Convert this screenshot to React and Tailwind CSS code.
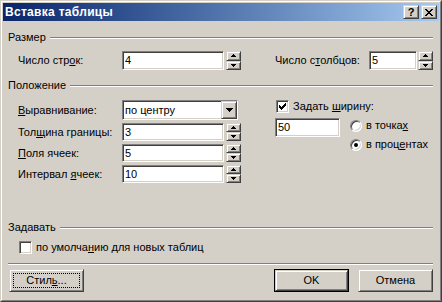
const raised =
  'border border-t-[#d4d0c8] border-l-[#d4d0c8] border-r-[#404040] border-b-[#404040] shadow-[inset_1px_1px_0_#fff,inset_-1px_-1px_0_#808080] bg-[#d4d0c8]';
const sunken =
  'border border-t-[#808080] border-l-[#808080] border-r-white border-b-white shadow-[inset_1px_1px_0_#404040,inset_-1px_-1px_0_#d4d0c8]';

function U({ children }) {
  return <span className="underline decoration-1 underline-offset-[1px]">{children}</span>;
}

function Pixels({ w, h, rows }) {
  return (
    <svg width={w} height={h} shapeRendering="crispEdges">
      {rows.map((r, y) =>
        r.split('').map((c, x) => (c === '#' ? <rect key={`${x}-${y}`} x={x} y={y} width="1" height="1" fill="#000" /> : null))
      )}
    </svg>
  );
}

function Spin() {
  return (
    <div className="flex h-full w-[15px] flex-col">
      <div className={`${raised} flex h-1/2 items-center justify-center`}>
        <Pixels w={5} h={3} rows={['..#..', '.###.', '#####']} />
      </div>
      <div className={`${raised} flex h-1/2 items-center justify-center`}>
        <Pixels w={5} h={3} rows={['#####', '.###.', '..#..']} />
      </div>
    </div>
  );
}

function Field({ w, value }) {
  return <div className={`${sunken} ${w} flex h-full items-center bg-white pl-[2px]`}>{value}</div>;
}

function Group({ title, className = '' }) {
  return (
    <div className={`flex h-[13px] items-center pl-[5px] pr-[6px] ${className}`}>
      <span>{title}</span>
      <div className="ml-[4px] h-[2px] flex-1 border-t border-b border-t-[#808080] border-b-white" />
    </div>
  );
}

function CheckBox({ checked }) {
  return (
    <div className={`${sunken} flex h-[13px] w-[13px] items-center justify-center bg-white`}>
      {checked && (
        <Pixels w={7} h={7} rows={['......#', '.....##', '#...###', '##.###.', '#####..', '.###...', '..#....']} />
      )}
    </div>
  );
}

function Radio({ checked }) {
  return (
    <div className="flex h-[12px] w-[12px] items-center justify-center rounded-full border border-t-[#808080] border-l-[#808080] border-r-white border-b-white bg-white shadow-[inset_1px_1px_0_#404040,inset_-1px_-1px_0_#d4d0c8]">
      {checked && <div className="h-[4px] w-[4px] rounded-full bg-black" />}
    </div>
  );
}

function SpinRow({ label, value, className = '' }) {
  return (
    <div className={`flex h-[18px] items-center ${className}`}>
      <span className="w-[104px]">{label}</span>
      <Field w="w-[102px]" value={value} />
      <div className="ml-[2px] h-full">
        <Spin />
      </div>
    </div>
  );
}

export default function App() {
  return (
    <div className="h-[302px] w-[442px] border border-t-[#d4d0c8] border-l-[#d4d0c8] border-r-[#404040] border-b-[#404040] bg-[#d4d0c8] font-['Liberation_Sans',Arial,sans-serif] text-[11px] leading-[13px] text-black">
      <div className="flex h-full flex-col border border-t-white border-l-white border-r-[#808080] border-b-[#808080] p-px">
        {/* заголовок окна */}
        <div className="flex h-[18px] items-center bg-linear-to-r from-[#0a246a] to-[#a6caf0] pl-[2px] pr-[2px]">
          <span className="flex-1 text-[12px] font-bold tracking-[0.3px] text-white">Вставка таблицы</span>
          <div className={`${raised} flex h-[14px] w-[16px] items-center justify-center text-[11px] font-bold`}>?</div>
          <div className={`${raised} ml-[2px] flex h-[14px] w-[16px] items-center justify-center`}>
            <Pixels w={8} h={7} rows={['##....##', '.##..##.', '..####..', '...##...', '..####..', '.##..##.', '##....##']} />
          </div>
        </div>

        <Group title="Размер" className="mt-[10px]" />
        <div className="mt-[7px] flex h-[19px] items-center">
          <span className="ml-[15px] w-[104px]">
            Число стр<U>о</U>к:
          </span>
          <Field w="w-[102px]" value="4" />
          <div className="ml-[2px] h-full">
            <Spin />
          </div>
          <span className="ml-[34px] w-[94px]">
            Число с<U>т</U>олбцов:
          </span>
          <Field w="w-[48px]" value="5" />
          <div className="ml-px h-full">
            <Spin />
          </div>
        </div>

        <Group title="Положение" className="mt-[9px]" />
        <div className="mt-[8px] flex">
          <div className="ml-[15px] flex flex-col">
            <div className="flex h-[20px] items-center">
              <span className="w-[104px]">
                <U>В</U>ыравнивание:
              </span>
              <div className={`${sunken} flex h-full w-[116px] items-center bg-white pl-[2px]`}>
                <span className="flex-1">по центру</span>
                <div className={`${raised} flex h-full w-[16px] items-center justify-center`}>
                  <Pixels w={7} h={4} rows={['#######', '.#####.', '..###..', '...#...']} />
                </div>
              </div>
            </div>
            <SpinRow
              className="mt-[3px]"
              value="3"
              label={
                <>
                  Тол<U>щ</U>ина границы:
                </>
              }
            />
            <SpinRow
              className="mt-[3px]"
              value="5"
              label={
                <>
                  <U>П</U>оля ячеек:
                </>
              }
            />
            <SpinRow
              className="mt-[3px]"
              value="10"
              label={
                <>
                  Интервал <U>я</U>чеек:
                </>
              }
            />
          </div>

          <div className="ml-[34px] flex flex-col">
            <div className="flex h-[13px] items-center">
              <div className="ml-px">
                <CheckBox checked />
              </div>
              <span className="ml-[4px]">
                Задать <U>ш</U>ирину:
              </span>
            </div>
            <div className="mt-[5px] flex items-start">
              <div className="h-[19px]">
                <Field w="w-[65px]" value="50" />
              </div>
              <div className="ml-[10px] mt-px flex flex-col gap-[6px]">
                <div className="flex h-[13px] items-center">
                  <Radio />
                  <span className="ml-[4px]">
                    в точка<U>х</U>
                  </span>
                </div>
                <div className="flex h-[13px] items-center">
                  <Radio checked />
                  <span className="ml-[4px]">
                    в проц<U>е</U>нтах
                  </span>
                </div>
              </div>
            </div>
          </div>
        </div>

        <Group title="Задавать" className="mt-[38px]" />
        <div className="ml-[16px] mt-[7px] flex h-[13px] items-center">
          <CheckBox />
          <span className="ml-[4px]">
            по умолча<U>н</U>ию для новых таблиц
          </span>
        </div>

        <div className="ml-[5px] mr-[6px] mt-[9px] h-[2px] border-t border-b border-t-[#808080] border-b-white" />

        <div className="mt-[4px] flex h-[23px] px-[6px]">
          <button className={`${raised} relative w-[75px]`}>
            <span className="absolute inset-[3px] border border-dotted border-black" />
            Стил<U>ь</U>...
          </button>
          <div className="ml-auto w-[75px] border border-black">
            <button className={`${raised} h-full w-full`}>OK</button>
          </div>
          <button className={`${raised} ml-[9px] w-[75px]`}>Отмена</button>
        </div>
      </div>
    </div>
  );
}
